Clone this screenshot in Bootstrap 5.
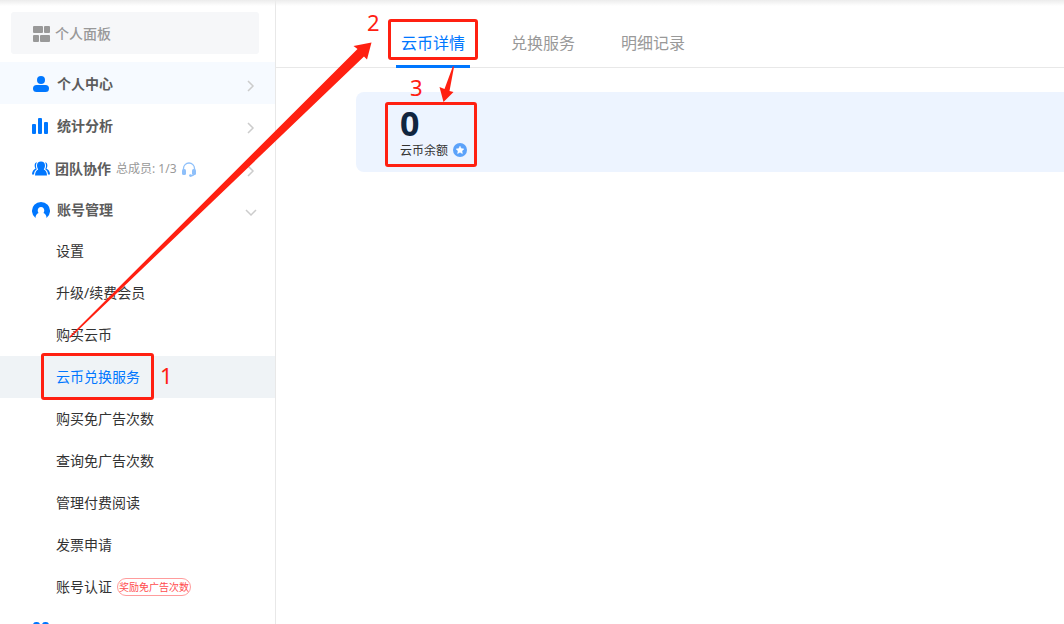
<!DOCTYPE html>
<html lang="zh-CN">
<head>
<meta charset="utf-8">
<meta name="viewport" content="width=device-width, initial-scale=1">
<title>云币兑换服务</title>
<link href="https://cdn.jsdelivr.net/npm/bootstrap@5.3.0/dist/css/bootstrap.min.css" rel="stylesheet">
<style>
  :root { --brand: #0077ff; --mark: #ff2011; }
  body { font: 14px/20px "Noto Sans", "Noto Sans CJK SC", sans-serif; color: #333; background: #fff; }
  a { text-decoration: none; color: inherit; }
  .top-shade { height: 6px; background: linear-gradient(#ececec, rgba(255,255,255,0)); z-index: 2; }
  .side { width: 276px; border-right: 1px solid #e8e8e8; padding-top: 12px; }
  .row-item { height: 42px; flex: none; }
  .panel-btn { margin: 0 16px 8px 11px; padding: 2px 0 0 22px; background: #f6f7f9; border: 0; border-radius: 3px; color: #999; font-weight: 500; gap: 5px; }
  .group-btn { padding: 2px 20px 0 32px; border: 0; background: none; color: #5c5c5c; font-weight: 700; gap: 7px; }
  .group-btn.tight { gap: 5px; padding-top: 4px; }
  .group-btn.lit { background: #f6faff; }
  .group-btn .arrow { margin-left: auto; margin-top: 4px; overflow: visible; }
  .members { font-size: 12px; font-weight: 400; color: #999; }
  .sub-link { padding-left: 56px; }
  .sub-link.active { background: #eff3f6; color: var(--brand); }
  .reward { font-size: 10px; line-height: 16px; padding: 0 1px; margin-left: 5px; color: #ff4d4f; border: 1px solid #ff9c9c; border-radius: 9px; }
  .tabs { height: 68px; border-bottom: 1px solid #e8e8e8; padding-left: 120px; gap: 36px; font-size: 16px; color: #999; }
  .tabs a { width: 74px; padding-top: 33px; text-align: center; white-space: nowrap; }
  .tabs a.active { height: 68px; color: var(--brand); border-bottom: 3px solid var(--brand); }
  .balance { margin: 24px 0 0 80px; height: 80px; padding: 12px 44px; background: #edf4ff; border-radius: 8px 0 0 8px; }
  .amount { font-size: 34px; line-height: 39px; font-weight: 700; color: #10253f; }
  .unit { font-size: 12px; line-height: 13px; gap: 5px; }
  .mark-box { position: absolute; border: 3px solid var(--mark); border-radius: 3px; pointer-events: none; z-index: 3; }
  .mark-num { position: absolute; font-size: 22px; line-height: 24px; color: var(--mark); z-index: 3; }
  .m1 { left: 41px; top: -3px; width: 113px; height: 47px; }
  .n1 { left: 160px; top: 7px; }
  .m2 { left: 112px; top: 19px; width: 90px; height: 41px; }
  .n2 { left: 91px; top: 10px; }
  .m3 { left: 29px; top: 10px; width: 92px; height: 65px; }
  .n3 { left: 54px; top: -17px; }
  .arrows { z-index: 4; pointer-events: none; }
</style>
</head>
<body>
<div class="d-flex vh-100 overflow-hidden position-relative">
  <div class="top-shade position-absolute top-0 start-0 w-100"></div>

  <nav class="side d-flex flex-column flex-shrink-0">
    <button type="button" class="panel-btn row-item d-flex align-items-center">
      <svg width="17" height="17" viewBox="0 0 17 17" fill="#999"><rect width="10" height="7" rx="1"/><rect x="11" width="6" height="7" rx="1"/><rect y="9" width="6" height="7" rx="1"/><rect x="7" y="9" width="10" height="7" rx="1"/></svg>
      个人面板
    </button>
    <button type="button" class="group-btn lit row-item d-flex align-items-center">
      <svg width="18" height="18" viewBox="0 0 18 18" fill="#0077ff"><circle cx="9" cy="5" r="4"/><rect x="1" y="10" width="16" height="7" rx="3.5"/></svg>
      个人中心
      <svg class="arrow" width="10" height="12" viewBox="0 0 10 12" fill="none" stroke="#ccc" stroke-width="1.5"><path d="M3 1l5 5-5 5"/></svg>
    </button>
    <button type="button" class="group-btn row-item d-flex align-items-center">
      <svg width="18" height="18" viewBox="0 0 18 18" fill="#0077ff"><rect y="7" width="4" height="10" rx="1"/><rect x="6" y="1" width="4" height="16" rx="1"/><rect x="12" y="5" width="4" height="12" rx="1"/></svg>
      统计分析
      <svg class="arrow" width="10" height="12" viewBox="0 0 10 12" fill="none" stroke="#ccc" stroke-width="1.5"><path d="M3 1l5 5-5 5"/></svg>
    </button>
    <button type="button" class="group-btn tight row-item d-flex align-items-center">
      <svg width="18" height="18" viewBox="0 0 18 18" fill="#0077ff"><path d="M5 5.500C5 3 6.500 1.500 9 1.500S13 3 13 5.500c0 2-.8 3-1.200 4C13.500 10.200 15 12 15 15.500H3c0-3.500 1.500-5.300 3.200-6C5.800 8.500 5 7.500 5 5.500z"/><path d="M5 2.200C3 2.500 2.500 4 2.700 6c.1 1.500.7 2 .8 2.800C1.500 9.500 0 11.500 0 14.500h2c.2-2.500 1-4 2.800-5.200C3.800 7.500 3.500 4.500 5 2.200zM13 2.200c2 .3 2.500 1.800 2.300 3.800-.1 1.500-.7 2-.8 2.800 2 .7 3.500 2.700 3.500 5.700h-2c-.2-2.500-1-4-2.800-5.200 1-1.800 1.300-4.800-.2-7.100z"/></svg>
      团队协作
      <span class="members">总成员: 1/3</span>
      <svg width="14" height="15" viewBox="0 0 14 15" fill="#8fc0fa"><path d="M1.500 8V6.500a5.500 5.500 0 0 1 11 0V8M12.500 11c0 2-2 2.800-4 2.800" fill="none" stroke="#8fc0fa" stroke-width="1.300"/><rect y="7" width="4" height="6" rx="1.500"/><rect x="10" y="7" width="4" height="6" rx="1.500"/><circle cx="8.500" cy="13.600" r="1.400"/></svg>
      <svg class="arrow" width="10" height="12" viewBox="0 0 10 12" fill="none" stroke="#ccc" stroke-width="1.5"><path d="M3 1l5 5-5 5"/></svg>
    </button>
    <button type="button" class="group-btn row-item d-flex align-items-center">
      <svg width="18" height="18" viewBox="0 0 18 18" fill="#0077ff"><path d="M3.500 17A9 9 0 1 1 14.500 17C14.500 14.500 13.500 13 11.500 12 13.200 9.500 12 6 9 6S4.800 9.500 6.500 12C4.500 13 3.500 14.500 3.500 17z"/></svg>
      账号管理
      <svg class="arrow" width="10" height="12" viewBox="0 0 10 12" fill="none" stroke="#ccc" stroke-width="1.5"><path d="M1 4l5 5 5-5"/></svg>
    </button>

    <a href="#" class="sub-link row-item d-flex align-items-center">设置</a>
    <a href="#" class="sub-link row-item d-flex align-items-center">升级/续费会员</a>
    <a href="#" class="sub-link row-item d-flex align-items-center">购买云币</a>
    <div class="position-relative">
      <a href="#" class="sub-link active row-item d-flex align-items-center" aria-current="page">云币兑换服务</a>
      <span class="mark-box m1"></span><span class="mark-num n1">1</span>
    </div>
    <a href="#" class="sub-link row-item d-flex align-items-center">购买免广告次数</a>
    <a href="#" class="sub-link row-item d-flex align-items-center">查询免广告次数</a>
    <a href="#" class="sub-link row-item d-flex align-items-center">管理付费阅读</a>
    <a href="#" class="sub-link row-item d-flex align-items-center">发票申请</a>
    <a href="#" class="sub-link row-item d-flex align-items-center">账号认证<span class="reward">奖励免广告次数</span></a>
    <button type="button" class="group-btn row-item d-flex align-items-center" aria-label="更多应用">
      <svg width="18" height="18" viewBox="0 0 18 18" fill="#0077ff"><rect x="1" y="1" width="7" height="7" rx="3"/><rect x="10" y="1" width="7" height="7" rx="3"/><rect x="1" y="10" width="7" height="7" rx="3"/><rect x="10" y="10" width="7" height="7" rx="3"/></svg>
    </button>
  </nav>

  <main class="flex-grow-1">
    <div class="position-relative">
      <nav class="tabs d-flex">
        <a href="#" class="active">云币详情</a>
        <a href="#">兑换服务</a>
        <a href="#">明细记录</a>
      </nav>
      <span class="mark-box m2"></span><span class="mark-num n2">2</span>
    </div>
    <section class="balance position-relative">
      <div class="amount">0</div>
      <div class="unit d-flex align-items-center">云币余额
        <svg width="14" height="14" viewBox="0 0 14 14"><circle cx="7" cy="7" r="7" fill="#5ba2fa"/><path d="M7 3.200l1.200 2.400 2.700.4-2 1.900.5 2.700L7 9.300l-2.400 1.300.5-2.700-2-1.900 2.700-.4z" fill="#fff" stroke="#fff" stroke-width=".5" stroke-linejoin="round"/></svg>
      </div>
      <span class="mark-box m3"></span><span class="mark-num n3">3</span>
    </section>
  </main>

  <!-- step arrows drawn over the page -->
  <svg class="arrows position-absolute top-0 start-0" width="480" height="345" viewBox="0 0 480 345" fill="#ff2011">
    <path d="M69 337L357.500 49l-4-3 18-3.500-4.500 17-3-3L70 338z"/>
    <path d="M453 66l1 1-4.500 24 4 1-10 10-4-15 5 2z"/>
  </svg>
</div>
<script src="https://cdn.jsdelivr.net/npm/bootstrap@5.3.0/dist/js/bootstrap.bundle.min.js"></script>
</body>
</html>
